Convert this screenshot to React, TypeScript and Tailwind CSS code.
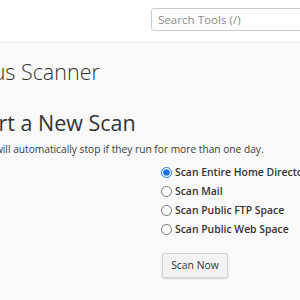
import React from 'react';

const options = [
  { id: 'home', label: 'Scan Entire Home Directory', checked: true },
  { id: 'mail', label: 'Scan Mail', checked: false },
  { id: 'ftp', label: 'Scan Public FTP Space', checked: false },
  { id: 'web', label: 'Scan Public Web Space', checked: false },
];

const App = () => {
  return (
    <div className="h-[300px] w-[300px] overflow-hidden bg-[#f9f9f9] font-['Open_Sans',sans-serif] text-[#333]">
      {/* Top bar */}
      <header className="h-[43px] bg-white border-b border-[#ececec] pl-[151px] pt-[8px]">
        <input
          type="text"
          placeholder="Search Tools (/)"
          className="block h-[23px] w-[200px] rounded-[3px] border border-[#cdcdcd] bg-white px-[6px] text-[11.6px] font-['Open_Sans',sans-serif] placeholder:text-[#8c8c8c] outline-none"
        />
      </header>

      {/* Page body, scrolled a little to the right */}
      <main className="-ml-[33px] w-[420px]">
        <h1 className="mt-[15px] text-[21.5px] leading-[28px] font-light text-[#333]">Virus Scanner</h1>
        <h2 className="mt-[23px] text-[21.5px] leading-[28px] font-normal text-[#333]">Start a New Scan</h2>
        <p className="mt-[5px] -ml-[2px] text-[10.2px] leading-[14px] text-[#3a3a3a]">
          Scans will automatically stop if they run for more than one day.
        </p>

        <form className="ml-[194px] mt-[7px]">
          {options.map(opt => (
            <label key={opt.id} className="flex h-[19px] items-center gap-[3px] whitespace-nowrap">
              <input
                type="radio"
                name="scan"
                defaultChecked={opt.checked}
                className="m-0 h-[11px] w-[11px] accent-[#1a73e8]"
              />
              <span className="text-[10.4px] font-semibold text-[#333]">{opt.label}</span>
            </label>
          ))}
          <button
            type="button"
            className="mt-[14px] ml-[1px] h-[25px] w-[66px] rounded-[2px] border border-[#d4d4d4] bg-[#f2f2f2] text-[10.4px] text-[#333] shadow-[0_1px_2px_rgba(0,0,0,0.15)]"
          >
            Scan Now
          </button>
        </form>
      </main>
    </div>
  );
};

export default App;
